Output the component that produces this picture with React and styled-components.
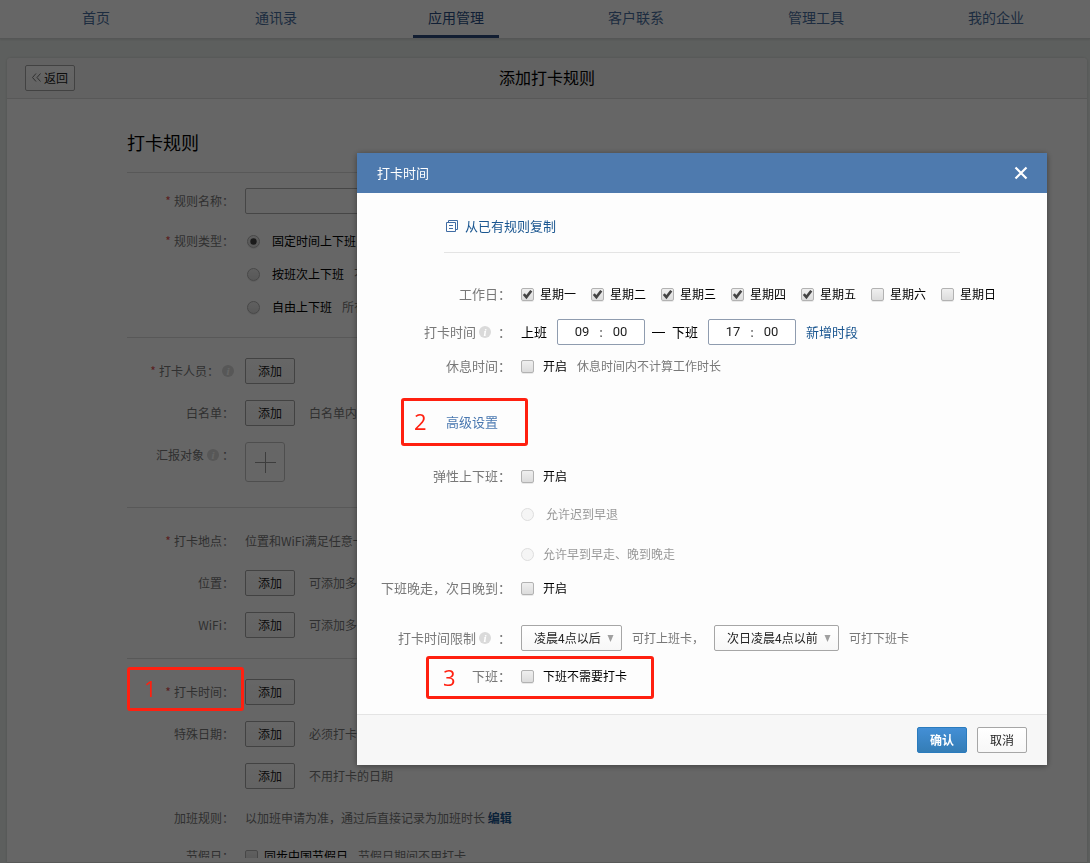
import styled, { createGlobalStyle } from "styled-components";

const GlobalStyle = createGlobalStyle`
  * {
    box-sizing: border-box;
  }

  body {
    margin: 0;
    background: #e9eeeb;
  }

  body, button, input, select {
    font-family: "Noto Sans CJK SC", "Liberation Sans", sans-serif;
    font-size: 12px;
    line-height: 18px;
    color: #000;
  }

  a {
    text-decoration: none;
  }
`;

const Page = styled.div`
  display: flex;
  flex-direction: column;
  height: 100vh;
  overflow: hidden;
`;

const Nav = styled.nav`
  display: flex;
  flex: none;
  padding: 0 4px 0 6px;
  background: #fff;
  border-bottom: 1px solid #d5d8d6;
  box-shadow: 0 1px 2px rgba(0, 0, 0, 0.1);
`;

const NavItem = styled.div`
  flex: 1;
  display: flex;
  justify-content: center;
`;

const NavLink = styled.a`
  padding: 7px 15px 8px;
  border-bottom: 3px solid ${(p) => (p.$active ? "#2f4d7d" : "transparent")};
  color: ${(p) => (p.$active ? "#2b4f86" : "#4a6fa0")};
  font-size: 14px;
  line-height: 20px;
`;

const Card = styled.main`
  flex: 1;
  min-height: 0;
  display: flex;
  flex-direction: column;
  margin: 19px 3px 0 7px;
  padding-bottom: 4px;
  border-bottom: 1px solid #dcdfdd;
  border-radius: 4px 4px 0 0;
  background: #fff;
  box-shadow: 0 0 3px rgba(0, 0, 0, 0.15);
`;

const CardHeader = styled.header`
  flex: none;
  display: grid;
  grid-template-columns: 1fr auto 1fr;
  align-items: center;
  height: 41px;
  padding: 0 18px;
  border-bottom: 1px solid #dcdcdc;
  border-radius: 4px 4px 0 0;
  background: #f5f5f5;
`;

const Title = styled.h1`
  margin: 0;
  padding-bottom: 2px;
  font-size: 16px;
  font-weight: 400;
  line-height: 24px;
`;

const Button = styled.button`
  display: inline-flex;
  flex: none;
  align-items: center;
  justify-content: center;
  gap: 3px;
  width: 50px;
  height: 26px;
  padding: 0 0 1px;
  border: 1px solid ${(p) => (p.$primary ? "#2a7bbd" : "#a6a6a6")};
  border-radius: 2px;
  background: ${(p) =>
    p.$primary
      ? "linear-gradient(#438fd6, #347db6)"
      : "linear-gradient(#fff, #f7f7f7)"};
  color: ${(p) => (p.$primary ? "#fff" : "#222")};
  font-weight: ${(p) => (p.$primary ? 700 : 400)};
`;

const CardBody = styled.div`
  flex: 1;
  min-height: 0;
  overflow: hidden;
  padding: 30px 120px 0;
`;

const Heading = styled.h2`
  margin: 0 0 16px;
  font-size: 18px;
  font-weight: 400;
  line-height: 27px;
`;

const Section = styled.section`
  display: flex;
  flex-direction: column;
  gap: ${(p) => p.$gap || 16}px;
  padding: ${(p) => p.$pad || "20px 0"};
  border-top: 1px solid #dcdcdc;
`;

const TextRows = styled.div`
  display: flex;
  flex-direction: column;
  gap: 12px;
`;

const Row = styled.div`
  position: relative;
  display: flex;
  gap: 11px;
`;

const RowLabel = styled.label`
  display: flex;
  flex: none;
  align-items: center;
  justify-content: flex-end;
  width: 107px;
  height: 26px;
  color: #787878;
`;

const Required = styled.span`
  margin-right: 3px;
  color: #e05050;
`;

const Field = styled.div`
  display: flex;
  align-items: center;
  gap: ${(p) => p.$gap || 14}px;
  min-height: 26px;
`;

const Options = styled.div`
  display: flex;
  flex-direction: column;
  gap: 7px;
  padding-left: 2px;
`;

const Hint = styled.span`
  color: #787878;
`;

const Link = styled.a`
  color: ${(p) => (p.$light ? "#4a78b0" : "#1a5690")};
  font-size: ${(p) => p.$size || 13}px;
  font-weight: ${(p) => (p.$bold ? 700 : 400)};
`;

const NameInput = styled.input`
  width: 300px;
  height: 26px;
  padding: 0 8px;
  border: 1px solid #b0b0b0;
  border-radius: 2px;
  background: #fff;
`;

const AddTarget = styled.button`
  display: grid;
  place-items: center;
  width: 40px;
  height: 40px;
  padding: 0;
  border: 1px solid #c4c4c4;
  border-radius: 3px;
  background: #fff;
`;

const InfoDot = styled.span`
  display: inline-block;
  width: 12px;
  height: 12px;
  margin: 0 ${(p) => p.$after ?? 7}px 0 3px;
  border-radius: 50%;
  background: #dadada;
  color: #fff;
  font: italic 700 11px/12px "Liberation Serif", serif;
  text-align: center;
`;

const Choice = styled.label`
  display: inline-flex;
  align-items: center;
  gap: ${(p) => p.$gap || 9}px;
  min-height: 26px;
  color: ${(p) => (p.$muted ? "#999" : "#000")};
`;

const BoxWrap = styled.span`
  display: grid;
  flex: none;
  width: 13px;
  height: 13px;

  > * {
    grid-area: 1 / 1;
  }

  svg {
    pointer-events: none;
    z-index: 1;
  }
`;

const BoxInput = styled.input`
  appearance: none;
  width: 13px;
  height: 13px;
  margin: 0;
  border: 1px solid #b2b2b2;
  border-radius: ${(p) => (p.type === "radio" ? "50%" : "2px")};
  background: linear-gradient(#efefef, #dcdcdc);
  box-shadow: 0 1px 0 rgba(0, 0, 0, 0.08);

  &:disabled {
    border-color: #dedede;
    background: #f5f5f5;
    box-shadow: none;
  }
`;

const Overlay = styled.div`
  position: fixed;
  inset: 0;
  z-index: 10;
  display: flex;
  align-items: flex-start;
  justify-content: flex-end;
  padding: 153px 43px 0;
  background: rgba(0, 0, 0, 0.6);
`;

const Dialog = styled.div`
  width: 690px;
  max-width: 100%;
  border-radius: 1px;
  background: #fdfdfd;
  box-shadow: 0 1px 6px rgba(0, 0, 0, 0.4);
`;

const DialogHeader = styled.div`
  display: flex;
  align-items: center;
  justify-content: space-between;
  height: 40px;
  padding: 0 19px 0 20px;
  background: #4e7aae;
  color: #fff;
  font-size: 13px;
`;

const CloseButton = styled.button`
  display: grid;
  place-items: center;
  width: 14px;
  height: 14px;
  padding: 0;
  border: 0;
  background: none;
`;

const DialogBody = styled.div`
  padding-bottom: 25px;
`;

const CopyBar = styled.div`
  display: flex;
  align-items: center;
  gap: 7px;
  margin: 0 87px;
  padding: 24px 0 17px 2px;
  border-bottom: 1px solid #e4e4e4;
`;

const DialogRow = styled.div`
  position: relative;
  display: flex;
  gap: 10px;
  margin-top: ${(p) => p.$space}px;
`;

const DialogLabel = styled.span`
  display: flex;
  flex: none;
  align-items: center;
  justify-content: flex-end;
  width: 154px;
  height: 26px;
  color: #787878;
  font-size: 13px;
`;

const AdvancedLabel = styled(DialogLabel)`
  padding-right: 13px;
`;

const DialogField = styled.div`
  display: flex;
  align-items: center;
  gap: ${(p) => p.$gap || 10}px;
  min-height: 26px;
`;

const TimeRange = styled.div`
  display: flex;
  align-items: center;
  font-size: 13px;
`;

const Dash = styled.span`
  width: 13px;
  height: 1px;
  margin: 0 7px;
  background: #000;
`;

const TimeBox = styled.span`
  display: flex;
  align-items: center;
  justify-content: center;
  width: 88px;
  height: 26px;
  margin: 0 10px;
  border: 1px solid #8f9caf;
  border-radius: 2px;
  background: #fff;

  &:has(+ ${Dash}) {
    margin-right: 0;
  }
`;

const TimeInput = styled.input`
  width: 32px;
  padding: 0;
  border: 0;
  background: none;
  color: #222;
  font-family: Roboto, sans-serif;
  font-size: 13px;
  text-align: center;
`;

const Colon = styled.span`
  width: 6px;
  color: #555;
  text-align: center;
`;

const SelectWrap = styled.span`
  display: inline-grid;
  align-items: center;

  > * {
    grid-area: 1 / 1;
  }

  svg {
    justify-self: end;
    margin-right: 8px;
    pointer-events: none;
  }
`;

const Select = styled.select`
  appearance: none;
  height: 26px;
  padding: 0 20px 0 12px;
  border: 1px solid #a6a6a6;
  border-radius: 2px;
  background: linear-gradient(#fff, #f7f7f7);
  color: #222;
`;

const DialogFooter = styled.div`
  display: flex;
  justify-content: flex-end;
  gap: 10px;
  padding: 12px 20px;
  border-top: 1px solid #e4e4e4;
  background: #f7f7f7;
`;

// red numbered frame drawn over a row
const Mark = styled.div`
  position: absolute;
  top: ${(p) => p.$top}px;
  left: ${(p) => p.$left}px;
  z-index: 20;
  display: flex;
  align-items: center;
  width: ${(p) => p.$width}px;
  height: ${(p) => p.$height}px;
  padding: 0 0 2px ${(p) => p.$indent || 10}px;
  border: 3px solid #ff2010;
  border-radius: 3px;
  color: #ff2010;
  font-family: "Open Sans", sans-serif;
  font-size: 22px;
  pointer-events: none;
`;

const Tick = ({ type, label, gap, muted, ...rest }) => (
  <Choice $gap={gap} $muted={muted}>
    <BoxWrap>
      <BoxInput type={type || "checkbox"} {...rest} />
      {rest.defaultChecked && (
        <svg width="13" height="13" viewBox="0 0 13 13">
          {type === "radio" ? (
            <circle cx="6.5" cy="6.5" r="3.2" fill="#444" />
          ) : (
            <path d="M2.8 6.2l2.6 2.9L10.3 2.8" fill="none" stroke="#444" strokeWidth="2.6" />
          )}
        </svg>
      )}
    </BoxWrap>
    {label}
  </Choice>
);

const FormRow = ({ label, required, info, htmlFor, children }) => (
  <Row>
    <RowLabel as={htmlFor ? "label" : "span"} htmlFor={htmlFor}>
      {required && <Required>*</Required>}
      {label}
      {info === "inside" && <InfoDot $after={3}>i</InfoDot>}
      {label && "："}
      {info === "after" && <InfoDot $after={0}>i</InfoDot>}
    </RowLabel>
    {children}
  </Row>
);

const AddField = ({ hint }) => (
  <Field>
    <Button type="button">添加</Button>
    {hint && <Hint>{hint}</Hint>}
  </Field>
);

const TimePicker = ({ name, hour, minute }) => (
  <TimeBox>
    <TimeInput aria-label={`${name} 时`} defaultValue={hour} />
    <Colon>:</Colon>
    <TimeInput aria-label={`${name} 分`} defaultValue={minute} />
  </TimeBox>
);

const Dropdown = ({ label, value }) => (
  <SelectWrap>
    <Select aria-label={label}>
      <option>{value}</option>
    </Select>
    <svg width="7" height="7" viewBox="0 0 7 7">
      <path d="M.5 0h6L3.5 7z" fill="#a0a0a0" />
    </svg>
  </SelectWrap>
);

const navItems = ["首页", "通讯录", "应用管理", "客户联系", "管理工具", "我的企业"];
const weekdays = ["一", "二", "三", "四", "五", "六", "日"];

const RuleForm = () => (
  <CardBody>
    <Heading>打卡规则</Heading>
    <Section $gap={14} $pad="15px 0 17px">
      <FormRow label="规则名称" required htmlFor="rule-name">
        <NameInput id="rule-name" />
      </FormRow>
      <FormRow label="规则类型" required>
        <Options>
          <Tick type="radio" name="kind" gap={12} label="固定时间上下班" defaultChecked />
          <Field $gap={10}>
            <Tick type="radio" name="kind" gap={12} label="按班次上下班" />
            <Hint>不</Hint>
          </Field>
          <Field $gap={10}>
            <Tick type="radio" name="kind" gap={12} label="自由上下班" />
            <Hint>所有</Hint>
          </Field>
        </Options>
      </FormRow>
    </Section>
    <Section $pad="20px 0 25px">
      <FormRow label="打卡人员" required info="after">
        <AddField />
      </FormRow>
      <FormRow label="白名单">
        <AddField hint="白名单内" />
      </FormRow>
      <FormRow label="汇报对象" info="inside">
        <AddTarget type="button" aria-label="添加汇报对象">
          <svg width="21" height="21" viewBox="0 0 21 21">
            <path d="M10.5 0v21M0 10.5h21" stroke="#999" />
          </svg>
        </AddTarget>
      </FormRow>
    </Section>
    <Section>
      <FormRow label="打卡地点" required>
        <Field>
          <Hint>位置和WiFi满足任意一</Hint>
        </Field>
      </FormRow>
      <FormRow label="位置">
        <AddField hint="可添加多" />
      </FormRow>
      <FormRow label="WiFi">
        <AddField hint="可添加多" />
      </FormRow>
    </Section>
    <Section>
      <FormRow label="打卡时间" required>
        <AddField />
        <Mark $top={-12} $left={0} $width={117} $height={44} $indent={14}>1</Mark>
      </FormRow>
      <FormRow label="特殊日期">
        <AddField hint="必须打卡" />
      </FormRow>
      <FormRow>
        <AddField hint="不用打卡的日期" />
      </FormRow>
      <TextRows>
        <FormRow label="加班规则">
          <Field>
            <Hint>
              以加班申请为准，通过后直接记录为加班时长{" "}
              <Link href="#" $size={12} $bold>编辑</Link>
            </Hint>
          </Field>
        </FormRow>
        <FormRow label="节假日">
          <Field $gap={10}>
            <Tick gap={6} label="同步中国节假日" />
            <Hint>节假日期间不用打卡</Hint>
          </Field>
        </FormRow>
      </TextRows>
    </Section>
  </CardBody>
);

const TimeDialog = () => (
  <Overlay>
    <Dialog role="dialog" aria-label="打卡时间">
      <DialogHeader>
        打卡时间
        <CloseButton type="button" aria-label="关闭">
          <svg width="14" height="14" viewBox="0 0 14 14">
            <path d="M1.5 1.5l11 11M12.5 1.5l-11 11" stroke="#fff" strokeWidth="2.2" />
          </svg>
        </CloseButton>
      </DialogHeader>
      <DialogBody>
        <CopyBar>
          <svg width="12" height="12" viewBox="0 0 12 12" fill="none" stroke="#3f6ba3">
            <path d="M2.5 2V.5h9v9H10" />
            <path d="M.5 2.5h9v9h-9zM3 5.5h4M3 8.5h4" />
          </svg>
          <Link href="#">从已有规则复制</Link>
        </CopyBar>
        <DialogRow $space={28}>
          <DialogLabel>工作日：</DialogLabel>
          <DialogField $gap={15}>
            {weekdays.map((day, i) => (
              <Tick key={day} gap={6} label={`星期${day}`} defaultChecked={i < 5} />
            ))}
          </DialogField>
        </DialogRow>
        <DialogRow $space={12}>
          <DialogLabel>
            打卡时间<InfoDot>i</InfoDot>：
          </DialogLabel>
          <TimeRange>
            上班
            <TimePicker name="上班" hour="09" minute="00" />
            <Dash />
            下班
            <TimePicker name="下班" hour="17" minute="00" />
            <Link href="#">新增时段</Link>
          </TimeRange>
        </DialogRow>
        <DialogRow $space={8}>
          <DialogLabel>休息时间：</DialogLabel>
          <DialogField>
            <Tick label="开启" />
            <Hint>休息时间内不计算工作时长</Hint>
          </DialogField>
        </DialogRow>
        <DialogRow $space={30}>
          <Mark $top={-11} $left={44} $width={127} $height={48}>2</Mark>
          <AdvancedLabel>
            <Link href="#" $light>高级设置</Link>
          </AdvancedLabel>
        </DialogRow>
        <DialogRow $space={28}>
          <DialogLabel>弹性上下班：</DialogLabel>
          <Tick label="开启" />
        </DialogRow>
        <DialogRow $space={12}>
          <DialogLabel />
          <Tick type="radio" name="flex" gap={12} muted disabled label="允许迟到早退" />
        </DialogRow>
        <DialogRow $space={14}>
          <DialogLabel />
          <Tick type="radio" name="flex" muted disabled label="允许早到早走、晚到晚走" />
        </DialogRow>
        <DialogRow $space={8}>
          <DialogLabel>下班晚走，次日晚到：</DialogLabel>
          <Tick label="开启" />
        </DialogRow>
        <DialogRow $space={24}>
          <DialogLabel>
            打卡时间限制<InfoDot>i</InfoDot>：
          </DialogLabel>
          <DialogField>
            <Dropdown label="上班卡时间" value="凌晨4点以后" />
            <Hint>可打上班卡，</Hint>
            <Dropdown label="下班卡时间" value="次日凌晨4点以前" />
            <Hint>可打下班卡</Hint>
          </DialogField>
        </DialogRow>
        <DialogRow $space={12}>
          <Mark $top={-7} $left={69} $width={228} $height={43} $indent={14}>3</Mark>
          <DialogLabel>下班：</DialogLabel>
          <Tick label="下班不需要打卡" />
        </DialogRow>
      </DialogBody>
      <DialogFooter>
        <Button type="button" $primary>确认</Button>
        <Button type="button">取消</Button>
      </DialogFooter>
    </Dialog>
  </Overlay>
);

export default function App() {
  return (
    <>
      <GlobalStyle />
      <Page>
        <Nav>
          {navItems.map((item) => (
            <NavItem key={item}>
              <NavLink href="#" $active={item === "应用管理"}>{item}</NavLink>
            </NavItem>
          ))}
        </Nav>
        <Card>
          <CardHeader>
            <Button type="button">
              <svg width="9" height="9" viewBox="0 0 9 9" fill="none" stroke="#777">
                <path d="M4 .5l-3.5 4L4 8.5M8.5 .5L5 4.5l3.5 4" />
              </svg>
              返回
            </Button>
            <Title>添加打卡规则</Title>
          </CardHeader>
          <RuleForm />
        </Card>
      </Page>
      <TimeDialog />
    </>
  );
}
